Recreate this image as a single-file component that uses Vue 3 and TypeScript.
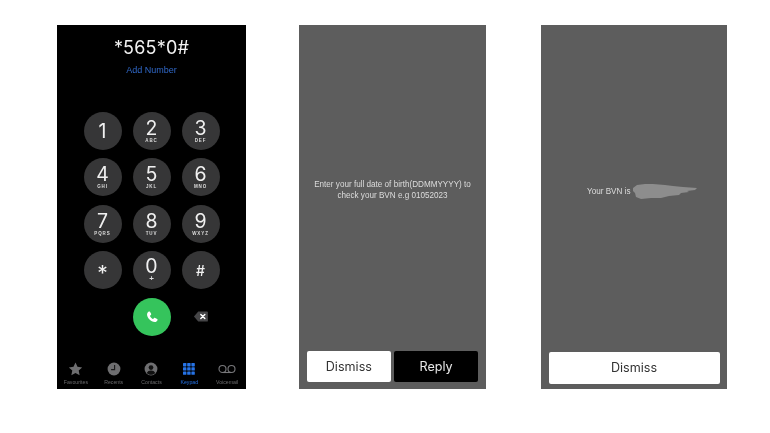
<script setup lang="ts">
interface DialKey { digit: string; letters: string; kind?: string }
const keys: DialKey[] = [
  { digit: '1', letters: '' },
  { digit: '2', letters: 'ABC' },
  { digit: '3', letters: 'DEF' },
  { digit: '4', letters: 'GHI' },
  { digit: '5', letters: 'JKL' },
  { digit: '6', letters: 'MNO' },
  { digit: '7', letters: 'PQRS' },
  { digit: '8', letters: 'TUV' },
  { digit: '9', letters: 'WXYZ' },
  { digit: '*', letters: '', kind: 'star' },
  { digit: '0', letters: '+', kind: 'zero' },
  { digit: '#', letters: '', kind: 'hash' },
]
const dots: number[][] = []
for (let r = 0; r < 3; r++) for (let c = 0; c < 3; c++) dots.push([c * 4.2, r * 4.2])
</script>

<template>
  <div class="page">
    <section class="phone dialer">
      <div class="number">*565*0#</div>
      <div class="add">Add Number</div>
      <div class="keys">
        <div v-for="k in keys" :key="k.digit" class="key" :class="k.kind">
          <span class="digit">{{ k.digit }}</span>
          <span v-if="k.letters" class="letters">{{ k.letters }}</span>
        </div>
      </div>
      <div class="call-row">
        <div class="call">
          <svg width="14" height="14" viewBox="0 0 24 24">
            <path fill="#fff" d="M6.6 2.6c.7-.4 1.5-.2 1.9.5l2 3.5c.3.6.2 1.3-.3 1.8L8.9 9.6c-.3.3-.3.6-.2 1 .8 1.8 2.8 3.900 4.700 4.700.4.100.7.100 1-.2l1.200-1.300c.5-.5 1.200-.6 1.800-.3l3.500 2c.7.400.9 1.200.5 1.900-1 1.800-2.500 3.200-4.600 3.100C10 20 4 14 3.500 8.100 3.400 5.800 4.800 3.600 6.600 2.600z"/>
          </svg>
        </div>
        <svg class="del" width="16" height="11" viewBox="0 0 16 12">
          <path fill="#454547" d="M5 .5h9.500a1 1 0 0 1 1 1v9a1 1 0 0 1-1 1H5L.3 6z"/>
          <path stroke="#fff" stroke-width="1.500" stroke-linecap="round" d="M7.800 3.800l4.400 4.400M12.200 3.800l-4.400 4.400"/>
        </svg>
      </div>
      <nav class="tabs">
        <div class="tab">
          <svg width="15" height="14" viewBox="0 0 24 24"><path fill="#6e6e70" d="M12 1l3.400 7.300 8 1-5.900 5.400 1.600 7.900L12 18.700l-7.100 3.900 1.600-7.900L.6 9.300l8-1z"/></svg>
          <span>Favourites</span>
        </div>
        <div class="tab">
          <svg width="14" height="14" viewBox="0 0 24 24"><circle cx="12" cy="12" r="11" fill="#6e6e70"/><path fill="none" stroke="#1c1c1c" stroke-width="2" d="M13 5v8H7"/></svg>
          <span>Recents</span>
        </div>
        <div class="tab">
          <svg width="14" height="14" viewBox="0 0 24 24"><circle cx="12" cy="12" r="11" fill="#6e6e70"/><circle cx="12" cy="9.500" r="4" fill="#111"/><path fill="#111" d="M4.800 19c1.200-3.200 3.800-4.500 7.200-4.500s6 1.300 7.200 4.500c-1.800 2-4.300 3-7.200 3s-5.400-1-7.200-3z"/></svg>
          <span>Contacts</span>
        </div>
        <div class="tab active">
          <svg width="14" height="14" viewBox="0 0 14 14">
            <rect v-for="(d, i) in dots" :key="i" :x="d[0] + 1" :y="d[1] + 1" width="3.400" height="3.400" rx=".6" fill="#2673e6"/>
          </svg>
          <span>Keypad</span>
        </div>
        <div class="tab">
          <svg width="18" height="14" viewBox="0 0 18 14"><g fill="none" stroke="#77777a" stroke-width="1.100"><circle cx="4.500" cy="7" r="3.500"/><circle cx="13.500" cy="7" r="3.500"/><path d="M4.500 10.500h9"/></g></svg>
          <span>Voicemail</span>
        </div>
      </nav>
    </section>

    <section class="phone alert second">
      <div class="message">
        <p>Enter your full date of birth(DDMMYYYY) to<br />check your BVN e.g 01052023</p>
      </div>
      <div class="actions">
        <button class="btn light" type="button">Dismiss</button>
        <button class="btn dark" type="button">Reply</button>
      </div>
    </section>

    <section class="phone alert third">
      <div class="message result">
        <span>Your BVN is</span>
        <svg width="65" height="17" viewBox="0 0 65 17">
          <path fill="#8d8d8d" d="M0 5L4 2L12 1L20 1L32 2L40 3L50 4L64 5L62 7L54 8L56 9L48 10L46 12L36 13L28 15L18 15L8 16L3 14L2 10L0 8Z"/>
        </svg>
      </div>
      <div class="actions single">
        <button class="btn light wide" type="button">Dismiss</button>
      </div>
    </section>
  </div>
</template>

<style scoped>
.page {
  width: 770px;
  height: 433px;
  box-sizing: border-box;
  padding: 25px 0 0 57px;
  display: flex;
  align-items: flex-start;
  background: #fff;
  font-family: "Liberation Sans", Arial, sans-serif;
  overflow: hidden;
  filter: blur(0.4px);
}
.phone {
  height: 364px;
  box-sizing: border-box;
  display: flex;
  flex-direction: column;
  flex: none;
}
.dialer {
  width: 189px;
  background: #000;
  color: #fff;
  align-items: center;
}
.second { width: 187px; margin-left: 53px; }
.third { width: 186px; margin-left: 55px; }
.number {
  margin-top: 11px;
  height: 23px;
  line-height: 23px;
  font-family: "Inter", "Liberation Sans", sans-serif;
  font-weight: 400;
  font-size: 18px;
  color: #f2f2f2;
  letter-spacing: .2px;
}
.add {
  margin-top: 4px;
  height: 14px;
  line-height: 14px;
  font-size: 9px;
  color: #3068c8;
}
.keys {
  margin-top: 35px;
  display: grid;
  grid-template-columns: repeat(3, 38px);
  grid-auto-rows: 38px;
  column-gap: 11px;
  row-gap: 8.400px;
}
.key {
  border-radius: 50%;
  background: #363637;
  display: flex;
  flex-direction: column;
  align-items: center;
  justify-content: center;
  color: #f0f0f0;
}
.digit {
  font-size: 19.500px;
  line-height: 19px;
  font-family: "Inter", "Liberation Sans", sans-serif;
  font-weight: 400;
}
.letters {
  font-size: 4.500px;
  line-height: 5px;
  font-weight: 700;
  letter-spacing: .9px;
  color: #ddd;
}
.star .digit { font-size: 21px; margin-top: 7px; font-weight: 400; }
.hash .digit { font-size: 14px; font-weight: 500; }
.zero .digit { margin-top: -2px; }
.zero .letters { font-size: 8px; letter-spacing: 0; }
.call-row {
  margin-top: 8.500px;
  width: 136px;
  display: grid;
  grid-template-columns: 38px 38px 38px;
  column-gap: 11px;
  align-items: center;
  justify-items: center;
}
.call {
  grid-column: 2;
  width: 38px;
  height: 38px;
  border-radius: 50%;
  background: #35c45c;
  display: flex;
  align-items: center;
  justify-content: center;
}
.del { grid-column: 3; }
.tabs {
  margin-top: auto;
  width: 100%;
  box-sizing: border-box;
  padding: 0 0 4px;
  display: grid;
  grid-template-columns: repeat(5, 1fr);
}
.tab {
  display: flex;
  flex-direction: column;
  align-items: center;
  gap: 3px;
  font-size: 5.200px;
  line-height: 6px;
  color: #6c6c6e;
}
.tab.active { color: #2673e6; }
.alert {
  background: #5d5d5d;
  color: #dcdcdc;
}
.message {
  flex: 1;
  display: flex;
  align-items: flex-start;
  justify-content: center;
  font-size: 8.150px;
  line-height: 11px;
  text-align: center;
}
.message p { margin: 154px 0 0; }
.result {
  padding: 158px 0 0 46px;
  gap: 2px;
  justify-content: flex-start;
}
.result span { line-height: 17px; white-space: nowrap; }
.actions {
  display: flex;
  gap: 3.500px;
  padding: 0 8px 7px;
}
.single { padding: 0 7.500px 5.500px; }
.btn {
  flex: 1;
  height: 31.500px;
  border: 0;
  border-radius: 2px;
  font-family: "Inter", "Liberation Sans", sans-serif;
  font-size: 12.600px;
  padding: 0;
}
.light { background: #fff; color: #333; }
.dark { background: #000; color: #e8e8e8; }
</style>
